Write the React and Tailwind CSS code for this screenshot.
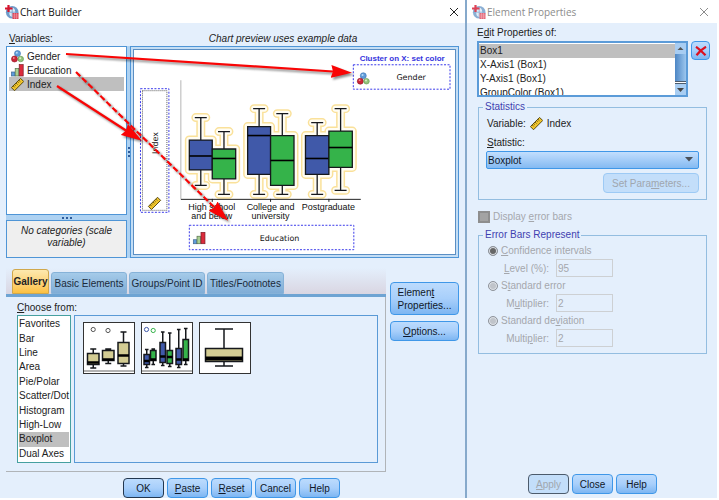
import React from "react";

const BLUE = "#4059a9";
const GREEN = "#35b34a";
const TAN = "#d3cc93";

const buttonClass =
  "flex h-5 items-center justify-center rounded-[4px] border border-[#3f97e8] bg-linear-to-b from-[#bcdbfd] via-[#a8cffb] to-[#7db6f2] text-[10px] leading-[13px] text-[#101828]";

function AppIcon({ faded }) {
  return (
    <svg viewBox="0 0 14 14" className={faded ? "h-[14px] w-[14px] opacity-80" : "h-[14px] w-[14px]"} aria-hidden="true">
      <circle cx="7.200" cy="7.200" r="6.300" fill="#6f9cca" />
      <ellipse cx="7.200" cy="7.200" rx="3" ry="4.500" fill="#dbe9f6" />
      <path d="M7.200 2.500v9M4 7.200h6.500" stroke="#6f9cca" strokeWidth="0.8" />
      <path d="M3.500 0v7M0 3.500h7.500" stroke="#d8142c" strokeWidth="2.200" />
      <rect x="7.500" y="8" width="6" height="6" fill="#dd4358" />
      <path d="M7.500 10h6M7.500 12h6M9.500 8V14M11.500 8V14" stroke="#f3a8b2" strokeWidth="0.500" />
    </svg>
  );
}

function NominalShape() {
  return (
    <>
      <circle cx="6.5" cy="3.5" r="3" fill="#5f9bd8" stroke="#3a74b4" strokeWidth="0.6" />
      <circle cx="3.5" cy="9" r="3" fill="#cc2537" stroke="#8e1222" strokeWidth="0.6" />
      <circle cx="9.7" cy="9" r="2.8" fill="#93c47c" stroke="#5b9247" strokeWidth="0.6" />
      <circle cx="5.8" cy="2.7" r="1" fill="#b8dbf8" />
      <circle cx="2.8" cy="8" r="0.9" fill="#f08f98" />
      <circle cx="9.2" cy="8.2" r="1" fill="#d7efc9" />
    </>
  );
}

function OrdinalShape() {
  return (
    <>
      <rect x="0.5" y="8" width="3.5" height="4" fill="#5d9ddd" stroke="#41678f" strokeWidth="0.7" />
      <rect x="4.2" y="4.5" width="3.6" height="7.5" fill="#a9cf93" stroke="#55704a" strokeWidth="0.7" />
      <rect x="8.2" y="0.6" width="4" height="11.4" fill="#dc2b3c" stroke="#7c1e28" strokeWidth="0.7" />
    </>
  );
}

function ScaleShape() {
  return (
    <g transform="rotate(-45 6.5 6.5)">
      <rect x="0" y="4.4" width="13" height="4.4" fill="#f0c52c" stroke="#54460f" strokeWidth="0.9" />
      <path d="M2.5 4.5v2M4.5 4.5v1.6M6.5 4.5v2M8.5 4.5v1.6M10.5 4.5v2" stroke="#54460f" strokeWidth="0.8" />
    </g>
  );
}

const shapes = { nominal: NominalShape, ordinal: OrdinalShape, scale: ScaleShape };

function MeasureIcon({ kind }) {
  const Shape = shapes[kind];
  return (
    <svg viewBox="0 0 13 13" className="h-[13px] w-[13px] shrink-0" aria-hidden="true">
      <Shape />
    </svg>
  );
}

// x0, x1, box top, box bottom, median, upper whisker, lower whisker, fill
const previewBoxes = [
  [188.5, 211.5, 140, 170, 156, 117.5, 185.5, BLUE],
  [211.5, 235, 149, 179, 158.5, 131.5, 194.5, GREEN],
  [247, 270, 126.5, 174.5, 135.5, 108.5, 194.5, BLUE],
  [270, 293.5, 135.5, 185.5, 160.5, 113.5, 194.5, GREEN],
  [305, 328.5, 135.5, 174.5, 158.5, 122.5, 194.5, BLUE],
  [328.5, 352, 131, 167.5, 147.5, 108.5, 190.5, GREEN],
];

function outline([x0, x1, top, bottom, , upper, lower], cap) {
  const cx = (x0 + x1) / 2;
  return `M${x0} ${top}H${x1}V${bottom}H${x0}ZM${cx} ${top}V${upper}M${cx - cap} ${upper}H${cx + cap}M${cx} ${bottom}V${lower}M${cx - cap} ${lower}H${cx + cap}`;
}

function BoxShape({ box, cap, line, median }) {
  return (
    <>
      <path d={outline(box, cap)} fill={box[7]} stroke="#16181c" strokeWidth={line} />
      <path d={`M${box[0]} ${box[4]}H${box[1]}`} stroke="#000" strokeWidth={median} />
    </>
  );
}

function ChartPreview() {
  const label = "font-['Liberation_Sans',sans-serif] text-[9px]";
  const zone = "font-['DejaVu_Sans',sans-serif] text-[8px]";
  return (
    <svg viewBox="133 50 322 204" className="block h-[204px] w-full bg-white" role="img" aria-label="Clustered boxplot preview">
      <g fill="none" stroke="#fae19a" strokeWidth="9" strokeLinejoin="round" strokeLinecap="round">
        {previewBoxes.map((b, i) => <path key={i} d={outline(b, 5)} />)}
      </g>
      <g fill="none" stroke="#fffdf4" strokeWidth="6" strokeLinejoin="round" strokeLinecap="round">
        {previewBoxes.map((b, i) => <path key={i} d={outline(b, 5)} />)}
      </g>
      {previewBoxes.map((b, i) => <BoxShape key={i} box={b} cap={6} line={1.3} median={1.6} />)}
      <path d="M180 80V199" stroke="#b5b5b5" />
      <path d="M180 199.5H360.500M211.500 199V202M270 199V202M328.500 199V202" stroke="#222" />
      <g textAnchor="middle" fill="#111" className={label}>
        <text x="211" y="210">High school</text>
        <text x="211" y="219">and below</text>
        <text x="270" y="210">College and</text>
        <text x="270" y="219">university</text>
        <text x="328" y="210">Postgraduate</text>
      </g>
      <g fill="none" stroke="#3939ea" strokeDasharray="2 1.5">
        <rect x="353" y="64.5" width="97" height="24.5" />
        <rect x="188.500" y="225.500" width="165" height="24.500" />
        <rect x="139.500" y="88.500" width="28.500" height="124" />
      </g>
      <rect x="141.500" y="90.500" width="24.500" height="120" fill="none" stroke="#333" strokeWidth="0.8" strokeDasharray="1 1" />
      <text x="402" y="61" textAnchor="middle" fill="#3434dd" className="font-['Liberation_Sans',sans-serif] text-[8px] font-bold">
        Cluster on X: set color
      </text>
      <g textAnchor="middle" fill="#111" className={zone}>
        <text x="411" y="80">Gender</text>
        <text x="279" y="241">Education</text>
        <text transform="translate(157 143) rotate(-90)">Index</text>
      </g>
      <g transform="translate(356.500 72)"><NominalShape /></g>
      <g transform="translate(192 232)"><OrdinalShape /></g>
      <g transform="translate(147 197)"><ScaleShape /></g>
    </svg>
  );
}

function AnnotationArrows() {
  return (
    <svg
      viewBox="0 23 460 235"
      className="pointer-events-none absolute top-0 left-0 h-[235px] w-[460px] drop-shadow-[2px_2px_1px_rgba(0,0,0,0.45)]"
      aria-hidden="true"
    >
      <defs>
        <marker id="head" markerUnits="userSpaceOnUse" markerWidth="22" markerHeight="14" refX="2" refY="7" orient="auto">
          <path d="M0 0.500L21 7L0 13.500L2 7Z" fill="#f90505" />
        </marker>
      </defs>
      <g stroke="#f90505" strokeWidth="2.2" fill="none">
        <path d="M66 54L333 71.500" markerEnd="url(#head)" />
        <path d="M57 86L126 130.500" markerEnd="url(#head)" />
        <path d="M76 72L214.500 207.500" strokeDasharray="6 2.500" markerEnd="url(#head)" />
      </g>
    </svg>
  );
}

const simpleBoxes = [
  [4, 15.5, 31, 42, 40, 26.5, 45.5, TAN],
  [19, 30.5, 28, 38, 37, 26.5, 41, TAN],
  [34.5, 45.5, 20, 41, 33, 9.5, 43.5, TAN],
];
const clusteredBoxes = [
  [2.5, 8, 32, 42, 38.5, 27, 45, BLUE],
  [9, 14.5, 28, 38, 37, 26.5, 42, GREEN],
  [18.5, 24, 20, 40, 34, 9.5, 43, BLUE],
  [25.5, 31, 28, 41, 34.5, 10.5, 44, GREEN],
  [34.5, 40, 26, 42, 37, 7, 45, BLUE],
  [41.5, 47, 17, 38, 37, 6, 42, GREEN],
];

const thumbnails = [
  { name: "Simple boxplot", boxes: simpleBoxes, cap: 3, median: 2.5, axis: true, dots: [[9.7, 7, "#555"], [24.5, 8, "#555"]] },
  { name: "Clustered boxplot", boxes: clusteredBoxes, cap: 1.8, median: 2.5, axis: true, dots: [[5, 7, BLUE], [11.7, 8, GREEN]] },
  { name: "1-D boxplot", boxes: [[6, 43, 26, 39, 36, 6.5, 43.5, TAN]], cap: 9, median: 4, axis: false, dots: [] },
];

function Thumbnail({ item }) {
  return (
    <button type="button" aria-label={item.name} className="block h-[52px] w-[52px] border border-[#333] bg-white">
      <svg viewBox="0.500 0.500 50 50" className="block h-[50px] w-[50px]" aria-hidden="true">
        {item.dots.map(([x, y, c]) => <circle key={x} cx={x} cy={y} r="2.1" fill="none" stroke={c} />)}
        {item.boxes.map((b, i) => <BoxShape key={i} box={b} cap={item.cap} line={1.5} median={item.median} />)}
        {item.axis && <path d="M0 48.500H52" stroke="#666" strokeWidth="1.2" />}
      </svg>
    </button>
  );
}

const variables = [
  ["Gender", "nominal"],
  ["Education", "ordinal"],
  ["Index", "scale"],
];
const chartTypes = ["Favorites", "Bar", "Line", "Area", "Pie/Polar", "Scatter/Dot", "Histogram", "High-Low", "Boxplot", "Dual Axes"];
const properties = ["Box1", "X-Axis1 (Box1)", "Y-Axis1 (Box1)", "GroupColor (Box1)"];

function TitleBar({ title, faded }) {
  return (
    <header className="flex h-[23px] shrink-0 items-center bg-white pr-2 pl-[5px]">
      <AppIcon faded={faded} />
      <h1 className={`flex-1 pl-px font-['Open_Sans',sans-serif] text-[10px] leading-[14px] ${faded ? "text-[#8c8c8c]" : "text-[#111]"}`}>
        {title}
      </h1>
      <button type="button" aria-label={`Close ${title}`}>
        <svg viewBox="0 0 10 10" className="h-[10px] w-[10px]" aria-hidden="true">
          <path d="M1 1L9 9M9 1L1 9" stroke={faded ? "#8c8c8c" : "#222"} />
        </svg>
      </button>
    </header>
  );
}

function ChartBuilder() {
  const tab = "h-[22px] rounded-t-[3px] border border-[#86b2d8] bg-linear-to-b from-[#a5cbe9] to-[#80add6] text-center text-[10px] whitespace-nowrap text-[#1a2a3a]";
  return (
    <section className="flex min-w-0 flex-1 flex-col">
      <TitleBar title="Chart Builder" />
      <div className="relative flex flex-1 flex-col pr-2 pl-[6px]">
        <div className="flex h-[23px] items-center">
          <div className="w-[123px] pt-[9px] pl-[3px] leading-[14px]"><u>V</u>ariables:</div>
          <div className="flex-1 pt-[9px] pr-[22px] text-center leading-[14px] italic">Chart preview uses example data</div>
        </div>
        <div className="flex h-[212px]">
          <div className="flex w-[121px] flex-col">
            <ul role="listbox" aria-label="Variables" className="flex-1 border border-[#4f95d6] bg-white p-[2px]">
              {variables.map(([name, kind]) => (
                <li
                  key={name}
                  role="option"
                  aria-selected={name === "Index"}
                  className={`flex h-[14px] items-center gap-[3px] pl-[2px] ${name === "Index" ? "bg-[#bfbfbf]" : ""}`}
                >
                  <MeasureIcon kind={kind} />
                  {name}
                </li>
              ))}
            </ul>
            <div className="flex h-[5px] items-center justify-center gap-[2px] bg-[#aed2f2]">
              <i className="h-[2px] w-[2px] bg-[#2e5c9c]" />
              <i className="h-[2px] w-[2px] bg-[#2e5c9c]" />
              <i className="h-[2px] w-[2px] bg-[#2e5c9c]" />
            </div>
            <p className="h-[38px] border border-[#4f95d6] bg-[#efefef] px-3 pt-1 text-center leading-[12px] italic">
              No categories (scale variable)
            </p>
          </div>
          <div className="flex w-[3px] flex-col items-center justify-center gap-[2px] bg-[#aed2f2]">
            <i className="h-[2px] w-[2px] bg-[#2e5c9c]" />
            <i className="h-[2px] w-[2px] bg-[#2e5c9c]" />
            <i className="h-[2px] w-[2px] bg-[#2e5c9c]" />
          </div>
          <div className="min-w-0 flex-1 border border-[#4f95d6] bg-[#c4def5] p-[2px]">
            <div className="border border-[#5b8fc4]">
              <ChartPreview />
            </div>
          </div>
        </div>
        <AnnotationArrows />

        <div className="mt-[10px] flex">
          <div className="min-w-0 flex-1">
            <div role="tablist" className="flex h-[29px] items-end gap-[2px] border-b-[3px] border-[#6ea4d3] bg-linear-to-b from-[#e4effc] to-[#d9d6e2] pl-[6px]">
              <button type="button" role="tab" aria-selected="true" className="h-[25px] w-[37px] rounded-t-[3px] border border-[#d0a84c] bg-linear-to-b from-[#fde9ae] to-[#fcc140] text-[10px] font-bold text-[#222]">
                Gallery
              </button>
              <button type="button" role="tab" className={`${tab} w-[76px]`}>Basic Elements</button>
              <button type="button" role="tab" className={`${tab} w-[76px]`}>Groups/Point ID</button>
              <button type="button" role="tab" className={`${tab} w-[77px]`}>Titles/Footnotes</button>
            </div>
            <div className="border-r border-b border-[#b0b4b8] pr-[7px] pb-2 pl-[11px]">
              <div className="h-[18px] pt-[4px] leading-[14px]"><u>C</u>hoose from:</div>
              <div className="flex h-[148px] gap-[3px]">
                <ul role="listbox" aria-label="Choose from" className="flex w-[54px] flex-col border border-[#46a0a0] bg-white p-px">
                  {chartTypes.map((name) => (
                    <li
                      key={name}
                      role="option"
                      aria-selected={name === "Boxplot"}
                      className={`flex min-h-0 flex-1 items-center leading-[14px] whitespace-nowrap ${name === "Boxplot" ? "bg-[#bfbfbf]" : ""}`}
                    >
                      {name}
                    </li>
                  ))}
                </ul>
                <div className="flex flex-1 items-start gap-[6px] border border-[#5a9ad6] px-2 pt-[6px]">
                  {thumbnails.map((t) => <Thumbnail key={t.name} item={t} />)}
                </div>
              </div>
            </div>
          </div>
          <div className="ml-1 flex w-[69px] flex-col gap-[6px] pt-[14px]">
            <button type="button" className={`${buttonClass} h-[33px]`}>
              <span className="text-left">Elemen<u>t</u><br />Properties...</span>
            </button>
            <button type="button" className={buttonClass}><span><u>O</u>ptions...</span></button>
          </div>
        </div>

        <div className="flex justify-center gap-[3px] pt-[6px] pr-[2px]">
          <button type="button" className={`${buttonClass} w-[41px] border-[#23374f]`}>OK</button>
          <button type="button" className={`${buttonClass} w-[41px]`}><span><u>P</u>aste</span></button>
          <button type="button" className={`${buttonClass} w-[41px]`}><span><u>R</u>eset</span></button>
          <button type="button" className={`${buttonClass} w-[41px]`}>Cancel</button>
          <button type="button" className={`${buttonClass} w-[41px]`}>Help</button>
        </div>
      </div>
    </section>
  );
}

function ErrorOption({ id, label, field, value, checked }) {
  return (
    <>
      <div className="flex h-[17px] items-center gap-[3px] pl-[9px]">
        <input
          id={id}
          type="radio"
          name="errorbars"
          disabled
          defaultChecked={checked}
          className="h-[10px] w-[10px] appearance-none rounded-full border border-[#8f949b] bg-[#c0c4ca] shadow-[inset_0_0_0_1px_#dfe3e9] checked:bg-[#666]"
        />
        <label htmlFor={id}>{label}</label>
      </div>
      <div className="flex h-[18px] items-center">
        <label htmlFor={`${id}-value`} className="w-[77px] pr-[7px] text-right">{field}</label>
        <input id={`${id}-value`} type="text" disabled defaultValue={value} className="h-[18px] w-[57px] border border-[#cdd0d3] bg-transparent pl-px text-[#a4a7ac]" />
      </div>
    </>
  );
}

function ElementProperties() {
  return (
    <section className="flex w-[250px] shrink-0 flex-col shadow-[-2px_0_0_#86a9cb]">
      <TitleBar title="Element Properties" faded />
      <div className="flex flex-1 flex-col pr-[7px] pl-[10px]">
        <div className="h-[18px] pt-[3px] leading-[14px]">E<u>d</u>it Properties of:</div>
        <div className="flex items-start gap-[3px]">
          <div className="flex h-[56px] flex-1 border-2 border-[#5b9bd8] bg-white">
            <ul role="listbox" aria-label="Edit properties of" className="flex-1 overflow-hidden pt-px">
              {properties.map((name, i) => (
                <li key={name} role="option" aria-selected={i === 0} className={`h-[14px] pl-px leading-[14px] ${i === 0 ? "bg-[#bfbfbf]" : ""}`}>
                  {name}
                </li>
              ))}
            </ul>
            <div className="flex w-[11px] flex-col bg-[#a8cdf2]" aria-hidden="true">
              <svg viewBox="0 0 11 11" className="h-[11px] w-[11px]"><path d="M2.500 7L5.500 4L8.500 7Z" fill="#555" /></svg>
              <div className="flex-1 bg-linear-to-r from-[#4c86c4] to-[#9cc6ee]" />
              <div className="h-[3px] border-y border-[#4c5b6c] bg-white" />
              <svg viewBox="0 0 11 11" className="h-[11px] w-[11px]"><path d="M2 4L5.500 8L9 4Z" fill="#444" /></svg>
            </div>
          </div>
          <button type="button" aria-label="Remove" className={`${buttonClass} h-[19px] w-[19px]`}>
            <svg viewBox="0 0 12 10" className="h-[10px] w-[12px]" aria-hidden="true">
              <path d="M1 0.800Q5 3.500 10.500 9.200M11 0.800Q6 3.500 1.500 9.200" fill="none" stroke="#dc1020" strokeWidth="2.200" />
            </svg>
          </button>
        </div>

        <fieldset className="mt-[3px] mr-[3px] ml-px min-w-0 border border-[#93bde0] px-[7px] pb-[6px]">
          <legend className="-ml-[3px] px-[2px] leading-[14px] text-[#3f3fb0]">Statistics</legend>
          <div className="flex h-[18px] items-center gap-[4px] pl-px">
            Variable: <MeasureIcon kind="scale" /> Index
          </div>
          <label htmlFor="statistic" className="block h-[19px] pt-[4px] pl-px leading-[14px]"><u>S</u>tatistic:</label>
          <div className="relative">
            <select
              id="statistic"
              className="block h-[18px] w-full appearance-none rounded-[2px] border border-[#3f97e8] bg-linear-to-b from-[#c2defd] to-[#84baf2] pl-px text-[10px] text-[#101828]"
            >
              <option>Boxplot</option>
            </select>
            <svg viewBox="0 0 8 5" className="pointer-events-none absolute top-[6px] right-[6px] h-[5px] w-[8px]" aria-hidden="true">
              <path d="M0 0H8L4 4.500Z" fill="#4a5058" />
            </svg>
          </div>
          <button type="button" disabled className="mt-[4px] ml-auto flex h-5 w-[96px] items-center justify-center rounded-[4px] border border-[#9dcaf5] bg-[#c3defa] text-[#a0a6ae]">
            <span>Set Para<u>m</u>eters...</span>
          </button>
        </fieldset>

        <div className="mt-[10px] ml-px flex h-[13px] items-center gap-[3px] text-[#a4a7ac]">
          <input id="errors" type="checkbox" disabled className="h-[12px] w-[12px] appearance-none border-2 border-[#8e8e8e] bg-[#a3a3a3]" />
          <label htmlFor="errors">Display <u>e</u>rror bars</label>
        </div>

        <fieldset className="mt-[5px] mr-[3px] ml-px min-w-0 border border-[#93bde0] pb-[6px] text-[#a4a7ac]">
          <legend className="ml-[4px] px-[2px] leading-[14px] text-[#3f3fb0]">Error Bars Represent</legend>
          <ErrorOption id="ci" checked label={<><u>C</u>onfidence intervals</>} field={<><u>L</u>evel (%):</>} value="95" />
          <ErrorOption id="se" label={<>S<u>t</u>andard error</>} field={<>M<u>u</u>ltiplier:</>} value="2" />
          <ErrorOption id="sd" label={<>Standard de<u>v</u>iation</>} field={<>Multi<u>p</u>lier:</>} value="2" />
        </fieldset>

        <div className="mt-auto flex justify-center gap-[3px] pr-[2px] pb-1">
          <button type="button" disabled className="flex h-5 w-[41px] items-center justify-center rounded-[4px] border border-[#4c5b6c] bg-[#c3defa] text-[#a0a6ae]">
            <span><u>A</u>pply</span>
          </button>
          <button type="button" className={`${buttonClass} w-[41px]`}>Close</button>
          <button type="button" className={`${buttonClass} w-[41px]`}>Help</button>
        </div>
      </div>
    </section>
  );
}

export default function App() {
  return (
    <main className="min-h-screen bg-white pr-[2px] pb-[2px]">
      <div className="flex min-h-[calc(100vh-2px)] bg-[#e4effc] font-['Liberation_Sans',sans-serif] text-[10px] text-[#222]">
        <ChartBuilder />
        <ElementProperties />
      </div>
    </main>
  );
}
